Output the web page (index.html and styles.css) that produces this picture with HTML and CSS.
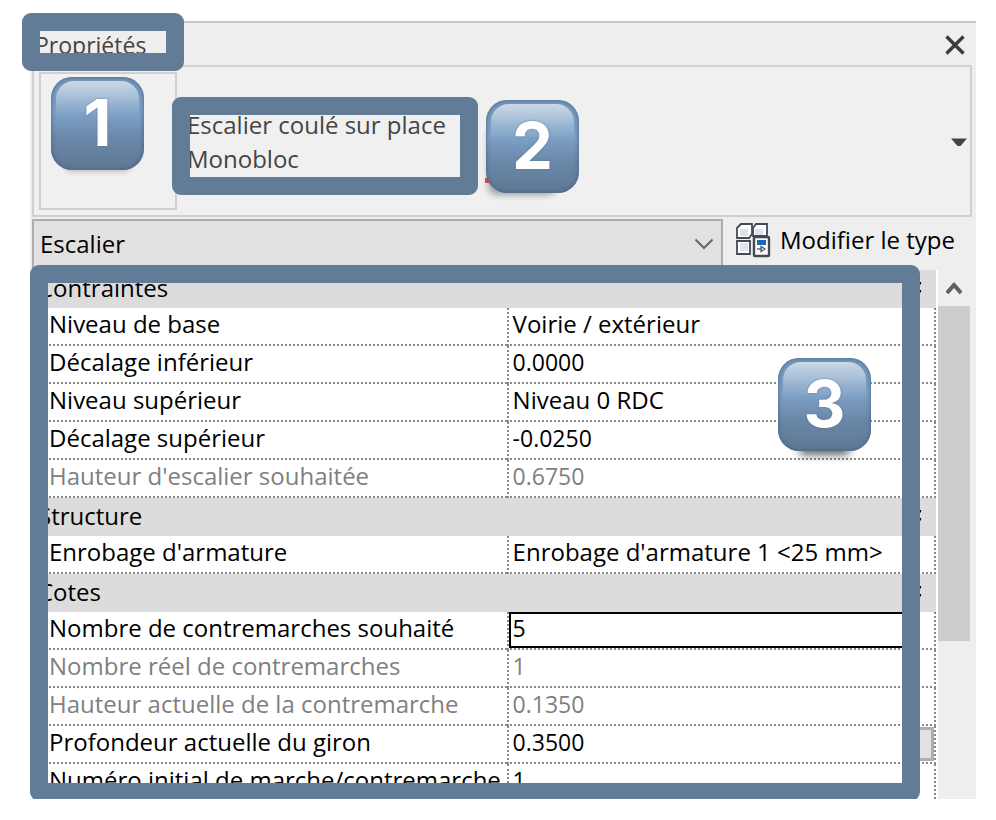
FILE: index.html
```html
<!DOCTYPE html>
<html lang="fr">
<head>
<meta charset="utf-8">
<title>Propriétés</title>
<link rel="stylesheet" href="styles.css">
</head>
<body>
<main class="panel">
  <header class="titlebar">
    <h1 class="title">Propriétés</h1>
    <button class="close" type="button" aria-label="Fermer">
      <svg width="22" height="22" viewBox="0 0 22 22"><path d="M2.500 2.500 19.500 19.500M19.500 2.500 2.500 19.500" fill="none" stroke="#3c3c3c" stroke-width="3.400"/></svg>
    </button>
    <span class="frame frame-title"></span>
  </header>

  <section class="type">
    <div class="preview"><span class="badge badge-one">1</span></div>
    <div class="family">
      <p>Escalier coulé sur place</p>
      <p>Monobloc</p>
      <span class="frame frame-family"></span>
      <span class="mark"></span>
      <span class="badge badge-two">2</span>
    </div>
    <button class="drop" type="button" aria-label="Choisir un type">
      <svg width="16" height="12" viewBox="0 0 16 12"><path d="M0 3.500H16L9.500 11H6.500Z" fill="#444"/></svg>
    </button>
  </section>

  <section class="filter">
    <div class="combo">
      <select aria-label="Catégorie"><option>Escalier</option></select>
      <svg class="combo-arrow" width="20" height="12" viewBox="0 0 20 12"><path d="M1.500 1.500 10 10 18.500 1.500" fill="none" stroke="#666" stroke-width="2"/></svg>
    </div>
    <button class="edit" type="button">
      <svg width="36" height="36" viewBox="0 0 36 36">
        <g fill="#fff" stroke="#434a54" stroke-width="1.800">
          <path d="M2 6 6 2H17V12L14 16H2Z"/>
          <path d="M18 6 21 2H32V14H18Z"/>
          <path d="M2 19H15V32H2Z"/>
        </g>
        <path d="M5 7H13V14H5ZM20 7H28V13H20ZM5 21H13V29H5Z" fill="#dfe2e8"/>
        <rect x="19" y="15" width="15" height="19" rx="1" fill="#fff" stroke="#434a54" stroke-width="2.400"/>
        <rect x="22" y="18" width="9" height="5" fill="#1f66b8"/>
        <path d="M22 27H27M26 24.500V29.500L30 27Z" fill="none" stroke="#59616c" stroke-width="1.300"/>
      </svg>
      <span>Modifier le type</span>
    </button>
  </section>

  <section class="grid">
    <table>
      <colgroup><col class="col-name"><col></colgroup>
      <tbody>
        <tr class="group"><th colspan="2"><div>Contraintes<svg width="12" height="14" viewBox="0 0 12 14"><path d="M1 5 6 1 11 2.500M1 13 6 9 11 10.500" fill="none" stroke="#000" stroke-width="2.400"/></svg></div></th></tr>
        <tr><th>Niveau de base</th><td>Voirie / extérieur</td></tr>
        <tr><th>Décalage inférieur</th><td class="number">0.0000</td></tr>
        <tr><th>Niveau supérieur</th><td>Niveau 0 RDC</td></tr>
        <tr><th>Décalage supérieur</th><td class="number">-0.0250</td></tr>
        <tr class="locked"><th>Hauteur d'escalier souhaitée</th><td class="number">0.6750</td></tr>
        <tr class="group"><th colspan="2"><div>Structure<svg width="12" height="14" viewBox="0 0 12 14"><path d="M1 5 6 1 11 2.500M1 13 6 9 11 10.500" fill="none" stroke="#000" stroke-width="2.400"/></svg></div></th></tr>
        <tr><th>Enrobage d'armature</th><td>Enrobage d'armature 1 &lt;25 mm&gt;</td></tr>
        <tr class="group"><th colspan="2"><div>Cotes<svg width="12" height="14" viewBox="0 0 12 14"><path d="M1 5 6 1 11 2.500M1 13 6 9 11 10.500" fill="none" stroke="#000" stroke-width="2.400"/></svg></div></th></tr>
        <tr><th><label for="risers">Nombre de contremarches souhaité</label></th><td class="number editing"><input id="risers" type="text" value="5"></td></tr>
        <tr class="locked"><th>Nombre réel de contremarches</th><td class="number">1</td></tr>
        <tr class="locked"><th>Hauteur actuelle de la contremarche</th><td class="number">0.1350</td></tr>
        <tr><th>Profondeur actuelle du giron</th><td class="number assoc-cell">0.3500<button class="assoc" type="button" aria-label="Associer un paramètre"></button></td></tr>
        <tr class="last"><th>Numéro initial de marche/contremarche</th><td class="number">1</td></tr>
      </tbody>
    </table>
    <div class="scroll">
      <button class="scroll-up" type="button" aria-label="Défiler vers le haut">
        <svg width="16" height="14" viewBox="0 0 16 14"><path d="M1 12 8 4 15 12" fill="none" stroke="#606060" stroke-width="4"/></svg>
      </button>
      <div class="thumb"></div>
    </div>
    <span class="frame frame-grid"></span>
    <span class="badge badge-three">3</span>
  </section>
</main>
</body>
</html>
```

FILE: styles.css
```css
* { box-sizing: border-box; }

body {
  margin: 0;
  background: #fff;
  color: #000;
  font: 24px/34px "Open Sans", "Noto Sans", sans-serif;
}

button, select, input { font: inherit; color: inherit; }

button {
  display: flex;
  align-items: center;
  padding: 0;
  border: 0;
  background: none;
}

.panel {
  margin: 21px 20px 0 30px;
  border-top: 2px solid #c9c9c9;
  background: #eee;
}

/* Title bar */
.titlebar {
  position: relative;
  display: flex;
  align-items: center;
  justify-content: space-between;
  height: 42px;
  padding: 2px 10px 0 5px;
}

.title {
  margin: 0;
  font-size: 23px;
  font-weight: 400;
  color: #444;
}

/* Type selector */
.type {
  display: flex;
  align-items: center;
  height: 152px;
  margin: 0 4px 0 2px;
  padding: 0 3px 0 5px;
  border: 2px solid #d0d0d0;
  background: #f0f0f0;
}

.preview {
  position: relative;
  width: 138px;
  height: 138px;
  border: 2px solid #d0d0d0;
}

.family {
  position: relative;
  flex: 1;
  margin-left: 10px;
  padding-top: 2px;
  color: #444;
}

.family p { margin: 0; }

/* Category row */
.filter {
  display: flex;
  gap: 12px;
  margin: 2px 4px 0 2px;
}

.combo {
  position: relative;
  flex: 1;
  height: 51px;
}

.combo select {
  width: 100%;
  height: 100%;
  padding: 0 6px 2px;
  border: 2px solid #adadad;
  border-radius: 0;
  background: #e1e1e1;
  appearance: none;
}

.combo-arrow {
  position: absolute;
  top: 19px;
  right: 9px;
}

.edit {
  gap: 9px;
  width: 237px;
  height: 42px;
  white-space: nowrap;
}

/* Property grid */
.grid {
  position: relative;
  display: flex;
  gap: 2px;
  padding: 0 6px 0 2px;
  background: linear-gradient(to left, #eee 38px, #fff 38px);
}

table {
  flex: 1;
  table-layout: fixed;
  border-spacing: 0;
}

.col-name { width: 52.5%; }

th, td {
  height: 38px;
  padding: 0 0 4px 4px;
  border-bottom: 2px dotted #888;
  font-weight: 400;
  line-height: 32px;
  text-align: left;
  white-space: nowrap;
}

td {
  border-right: 2px dotted #888;
  border-left: 2px dotted #888;
}

.number { font-size: 23px; }

tr th { padding-left: 17px; }

.locked { color: #808080; }

.group th {
  padding: 0 14px 2px 6px;
  border: 0;
  background: #dcdcdc;
}

.group div {
  display: flex;
  align-items: center;
  justify-content: space-between;
}

.last th, .last td {
  height: 35px;
  padding-bottom: 3px;
  border-bottom: 0;
}

td.editing { padding: 0 24px 0 0; }

.editing input {
  display: block;
  width: 100%;
  height: 36px;
  padding: 0 2px 4px;
  border: 2px solid #000;
  background: #fff;
  outline: 0;
}

.assoc-cell { position: relative; }

.assoc {
  position: absolute;
  top: 1px;
  right: 0;
  width: 28px;
  height: 34px;
  border: 3px solid #adadad;
  background: #e1e1e1;
}

.scroll { width: 32px; }

.scroll-up {
  justify-content: center;
  width: 100%;
  height: 36px;
}

.thumb {
  height: 335px;
  background: #cdcdcd;
}

/* Annotations laid over the panel */
.frame {
  position: absolute;
  border: 18px solid #627b96;
  border-radius: 9px;
  pointer-events: none;
}

.frame-title { top: -10px; left: -8px; width: 162px; height: 58px; }
.frame-family { top: -9px; left: -15px; width: 306px; height: 98px; }
.frame-grid { z-index: 1; top: -5px; bottom: -2px; left: 0; right: 56px; }

.mark {
  position: absolute;
  top: 72px;
  left: 298px;
  width: 6px;
  height: 5px;
  background: #f44;
}

.badge {
  position: absolute;
  z-index: 1;
  width: 93px;
  height: 93px;
  border-radius: 21px;
  background: linear-gradient(#7598bd, #7fa2c8 38%, #6a88a9 66%, #5e7893);
  color: #fff;
  font: 700 65px/92px Inter, "Liberation Sans", sans-serif;
  text-align: center;
  text-shadow: 0 0 2px #53708f;
}

.badge::before {
  content: "";
  position: absolute;
  inset: 4px 5px auto;
  z-index: -1;
  height: 34px;
  border-radius: 18px 18px 0 0;
  background: linear-gradient(#cbd9e6, #a9c0d8 45%, transparent);
}

.badge-one {
  top: 3px;
  left: 10px;
  box-shadow: inset 0 0 5px #46617f, 0 14px 5px -12px #0003;
}

.badge-two {
  top: -6px;
  left: 299px;
  box-shadow: inset 0 0 5px #46617f, -10px 14px 6px -12px #0005;
}

.badge-three {
  top: 88px;
  right: 105px;
  box-shadow: inset 0 0 5px #46617f, 0 26px 8px -22px #0009;
}
```
